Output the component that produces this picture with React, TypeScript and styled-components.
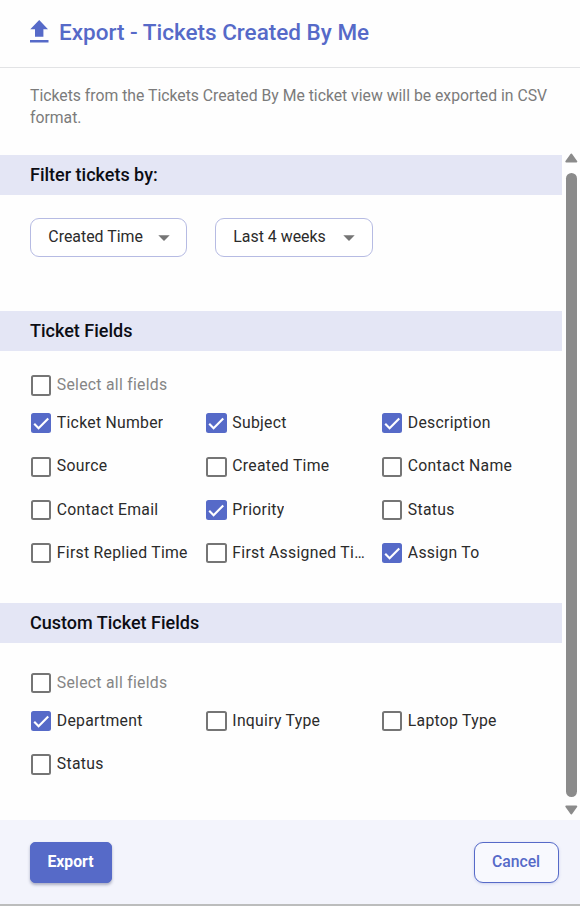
import React, { useState } from 'react';
import styled, { createGlobalStyle } from 'styled-components';

const GlobalStyle = createGlobalStyle`
  *, *::before, *::after { box-sizing: border-box; }
  html, body { margin: 0; padding: 0; background: #fff; }
  body { font-family: Roboto, "Liberation Sans", sans-serif; color: #2b2b2b; }
`;

const Dialog = styled.main`
  display: flex;
  flex-direction: column;
  width: 580px;
  height: 906px;
  overflow: hidden;
  background: #fefefe;
  border-bottom: 2px solid #bcbdbd;
`;

const Header = styled.header`
  flex: none;
  display: flex;
  align-items: center;
  height: 68px;
  padding: 0 29px 3px 30px;
  border-bottom: 1px solid #e2e3e5;
  color: #566ac8;
`;

const UploadIcon = styled.svg`
  flex: none;
  width: 19px;
  height: 23px;
  margin: -1px 10px 0 0;
`;

const Title = styled.h1`
  margin: 0 0 1px;
  font-size: 22.5px;
  line-height: 28px;
  font-weight: 500;
  white-space: nowrap;
`;

const Intro = styled.p`
  flex: none;
  height: 83px;
  margin: 0;
  padding: 17px 24px 0 30px;
  font-size: 15.75px;
  line-height: 22px;
  color: #7b7b7b;
`;

const ScrollArea = styled.div`
  flex: 1;
  display: flex;
  min-height: 0;
`;

const Content = styled.div`
  width: 562px;
  padding-top: 4px;
`;

const Section = styled.section<{ $height: number }>`
  height: ${(p) => p.$height}px;
`;

const SectionTitle = styled.h2`
  height: 40px;
  margin: 0;
  padding-left: 30px;
  background: #e4e6f5;
  color: #0c0d14;
  font-size: 18px;
  line-height: 40px;
  font-weight: 500;
`;

const Filters = styled.div`
  display: flex;
  gap: 28px;
  padding: 23px 0 0 30px;
`;

const Select = styled.button<{ $width: number }>`
  display: flex;
  align-items: center;
  width: ${(p) => p.$width}px;
  height: 39px;
  padding: 0 16px 2px 17.3px;
  border: 1px solid #b6bbe3;
  border-radius: 9px;
  background: #fff;
  color: #2b2b2b;
  font: 400 15.9px/22px Roboto, sans-serif;
  white-space: nowrap;
`;

const SelectValue = styled.span`
  width: 109.7px;
  text-align: left;
`;

const Caret = styled.svg`
  flex: none;
  width: 12px;
  height: 6px;
  margin-top: 2px;
`;

const Fields = styled.div<{ $top: number }>`
  padding: ${(p) => p.$top}px 0 0 30.9px;
`;

const Grid = styled.div`
  display: grid;
  grid-template-columns: repeat(3, 175.5px);
  grid-auto-rows: 43.3px;
  margin-top: 17.7px;
`;

const Field = styled.label`
  display: flex;
  align-items: flex-start;
  height: 20.25px;
  min-width: 0;
  cursor: pointer;
`;

const Box = styled.span<{ $on: boolean }>`
  flex: none;
  display: flex;
  width: 20.25px;
  height: 20.25px;
  border: 2px solid ${(p) => (p.$on ? '#566ac8' : '#757575')};
  border-radius: 2.5px;
  background: ${(p) => (p.$on ? '#566ac8' : '#fff')};
`;

const Check = styled.svg`
  width: 100%;
  height: 100%;
  overflow: visible;
`;

const HiddenInput = styled.input`
  display: none;
`;

const FieldText = styled.span<{ $muted?: boolean }>`
  max-width: 134px;
  margin: -1.1px 0 0 5.7px;
  overflow: hidden;
  text-overflow: ellipsis;
  white-space: nowrap;
  font-size: 15.75px;
  line-height: 21px;
  letter-spacing: 0.28px;
  color: ${(p) => (p.$muted ? '#858585' : '#2b2b2b')};
`;

const Scrollbar = styled.div`
  display: flex;
  flex-direction: column;
  align-items: center;
  width: 18px;
  padding: 2px 0 5px 1px;
`;

const Arrow = styled.svg`
  flex: none;
  width: 13px;
  height: 10px;
`;

const Thumb = styled.div`
  flex: 1;
  width: 11px;
  margin: 10px 0 8px;
  border-radius: 6px;
  background: #8b8b8b;
`;

const Footer = styled.footer`
  flex: none;
  display: flex;
  align-items: flex-start;
  justify-content: space-between;
  height: 84px;
  padding: 22px 21px 0 30px;
  background: #f3f4fc;
`;

const Button = styled.button<{ $primary?: boolean }>`
  width: ${(p) => (p.$primary ? 82 : 85)}px;
  height: 41px;
  padding: 0 1px 2px 0;
  border: 1px solid #566ac8;
  border-radius: ${(p) => (p.$primary ? 5 : 9)}px;
  background: ${(p) => (p.$primary ? '#566ac8' : '#f8f9fe')};
  box-shadow: ${(p) =>
    p.$primary ? '0 2px 3px rgba(40, 45, 90, 0.35)' : '0 1px 3px rgba(86, 106, 200, 0.25)'};
  color: ${(p) => (p.$primary ? '#fff' : '#566ac8')};
  font: ${(p) => (p.$primary ? 700 : 500)} 15.75px/22px Roboto, sans-serif;
`;

type FieldItem = [label: string, checked: boolean];

const TICKET_FIELDS: FieldItem[] = [
  ['Ticket Number', true],
  ['Subject', true],
  ['Description', true],
  ['Source', false],
  ['Created Time', false],
  ['Contact Name', false],
  ['Contact Email', false],
  ['Priority', true],
  ['Status', false],
  ['First Replied Time', false],
  ['First Assigned Time', false],
  ['Assign To', true],
];

const CUSTOM_FIELDS: FieldItem[] = [
  ['Department', true],
  ['Inquiry Type', false],
  ['Laptop Type', false],
  ['Status', false],
];

function CheckField({ label, initial = false, muted }: { label: string; initial?: boolean; muted?: boolean }) {
  const [on, setOn] = useState(initial);
  return (
    <Field>
      <HiddenInput type="checkbox" checked={on} onChange={() => setOn(!on)} />
      <Box $on={on}>
        {on && (
          <Check viewBox="0 0 16 16" fill="none">
            <path d="M1.2 8.6 5.5 13 15 3.4" stroke="#fff" strokeWidth="2.1" />
          </Check>
        )}
      </Box>
      <FieldText $muted={muted}>{label}</FieldText>
    </Field>
  );
}

function FieldSection({ title, items, height, top }: { title: string; items: FieldItem[]; height: number; top: number }) {
  return (
    <Section $height={height}>
      <SectionTitle>{title}</SectionTitle>
      <Fields $top={top}>
        <CheckField label="Select all fields" muted />
        <Grid>
          {items.map(([label, checked]) => (
            <CheckField key={label} label={label} initial={checked} />
          ))}
        </Grid>
      </Fields>
    </Section>
  );
}

function FilterSelect({ value, width }: { value: string; width: number }) {
  return (
    <Select type="button" $width={width}>
      <SelectValue>{value}</SelectValue>
      <Caret viewBox="0 0 12 6">
        <path d="M0.3 0.2h11.4L6 5.9z" fill="#757575" />
      </Caret>
    </Select>
  );
}

export default function App() {
  return (
    <>
      <GlobalStyle />
      <Dialog>
        <Header>
          <UploadIcon viewBox="0 0 19 23" fill="currentColor">
            <path d="M9.2 0 18 9.3h-4.6v7.4H5V9.3H0.3zM0 20h18.5v2.6H0z" />
          </UploadIcon>
          <Title>Export - Tickets Created By Me</Title>
        </Header>
        <Intro>Tickets from the Tickets Created By Me ticket view will be exported in CSV format.</Intro>
        <ScrollArea>
          <Content>
            <Section $height={156}>
              <SectionTitle>Filter tickets by:</SectionTitle>
              <Filters>
                <FilterSelect value="Created Time" width={157} />
                <FilterSelect value="Last 4 weeks" width={158} />
              </Filters>
            </Section>
            <FieldSection title="Ticket Fields" items={TICKET_FIELDS} height={292} top={24.3} />
            <FieldSection title="Custom Ticket Fields" items={CUSTOM_FIELDS} height={217} top={30.15} />
          </Content>
          <Scrollbar>
            <Arrow viewBox="0 0 13 10">
              <path d="M6.3 1.6 11.3 8.5H1.3z" fill="#8b8b8b" stroke="#8b8b8b" strokeWidth="2" strokeLinejoin="round" />
            </Arrow>
            <Thumb />
            <Arrow viewBox="0 0 13 10">
              <path d="M6.3 8.4 11.3 1.5H1.3z" fill="#8b8b8b" stroke="#8b8b8b" strokeWidth="2" strokeLinejoin="round" />
            </Arrow>
          </Scrollbar>
        </ScrollArea>
        <Footer>
          <Button type="button" $primary>Export</Button>
          <Button type="button">Cancel</Button>
        </Footer>
      </Dialog>
    </>
  );
}
